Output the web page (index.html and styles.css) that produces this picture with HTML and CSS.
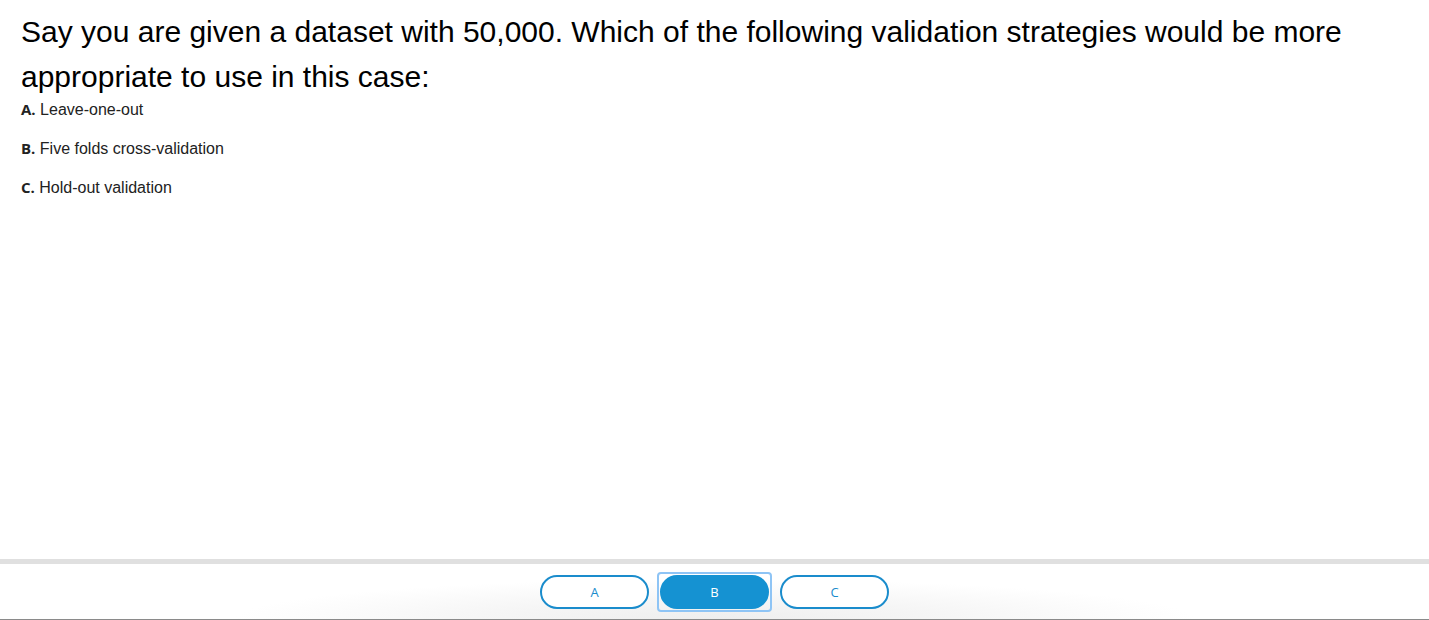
FILE: index.html
```html
<!DOCTYPE html>
<html lang="en">
<head>
<meta charset="utf-8">
<title>Quiz</title>
<link rel="stylesheet" href="styles.css">
</head>
<body>
<div class="page">
  <main class="content">
    <h1 class="question">Say you are given a dataset with 50,000. Which of the following validation strategies would be more appropriate to use in this case:</h1>
    <ul class="options">
      <li class="option"><span class="label">A.</span> Leave-one-out</li>
      <li class="option"><span class="label">B.</span> Five folds cross-validation</li>
      <li class="option"><span class="label">C.</span> Hold-out validation</li>
    </ul>
  </main>
  <footer class="footer">
    <div class="answers">
      <button class="answer">A</button>
      <button class="answer selected">B</button>
      <button class="answer">C</button>
    </div>
  </footer>
</div>
</body>
</html>
```
FILE: styles.css
```css
html, body {
  margin: 0;
  padding: 0;
  background: #fff;
}
.page {
  height: 100vh;
  display: flex;
  flex-direction: column;
}
.content {
  flex: 1;
  padding: 9px 20px 0 21px;
}
.question {
  margin: 0;
  font-family: "Liberation Sans", Arial, sans-serif;
  font-weight: normal;
  font-size: 30px;
  line-height: 45px;
  color: #000;
  max-width: 1360px;
}
.options {
  list-style: none;
  margin: 0;
  padding: 0;
}
.option {
  font-family: "Liberation Sans", Arial, sans-serif;
  font-size: 16px;
  line-height: 20px;
  color: #222;
  margin-bottom: 18px;
}
.label {
  font-family: "Open Sans", sans-serif;
  font-weight: 700;
  font-size: 15px;
  color: #222;
}
.footer {
  height: 61px;
  box-sizing: border-box;
  border-top: 5px solid #e0e0e0;
  border-bottom: 1px solid #8a8a8a;
  background: radial-gradient(ellipse 480px 40px at 50% 100%, #eeeeee 0%, #f6f6f6 50%, #ffffff 100%);
  display: flex;
  align-items: center;
  justify-content: center;
}
.answers {
  display: flex;
  gap: 11px;
}
.answer {
  position: relative;
  width: 109px;
  height: 34px;
  box-sizing: border-box;
  border: 2px solid #1a8ccc;
  border-radius: 17px;
  background: #fff;
  color: #1a8ccc;
  font-family: "Open Sans", sans-serif;
  font-size: 13px;
  padding: 0;
  cursor: pointer;
}
.answer.selected {
  background: #1592d2;
  border-color: #1592d2;
  color: #fff;
}
.answer.selected::after {
  content: "";
  position: absolute;
  top: -5px;
  left: -5px;
  right: -5px;
  bottom: -5px;
  border: 2px solid #8ec4f5;
  border-radius: 4px;
}
```
